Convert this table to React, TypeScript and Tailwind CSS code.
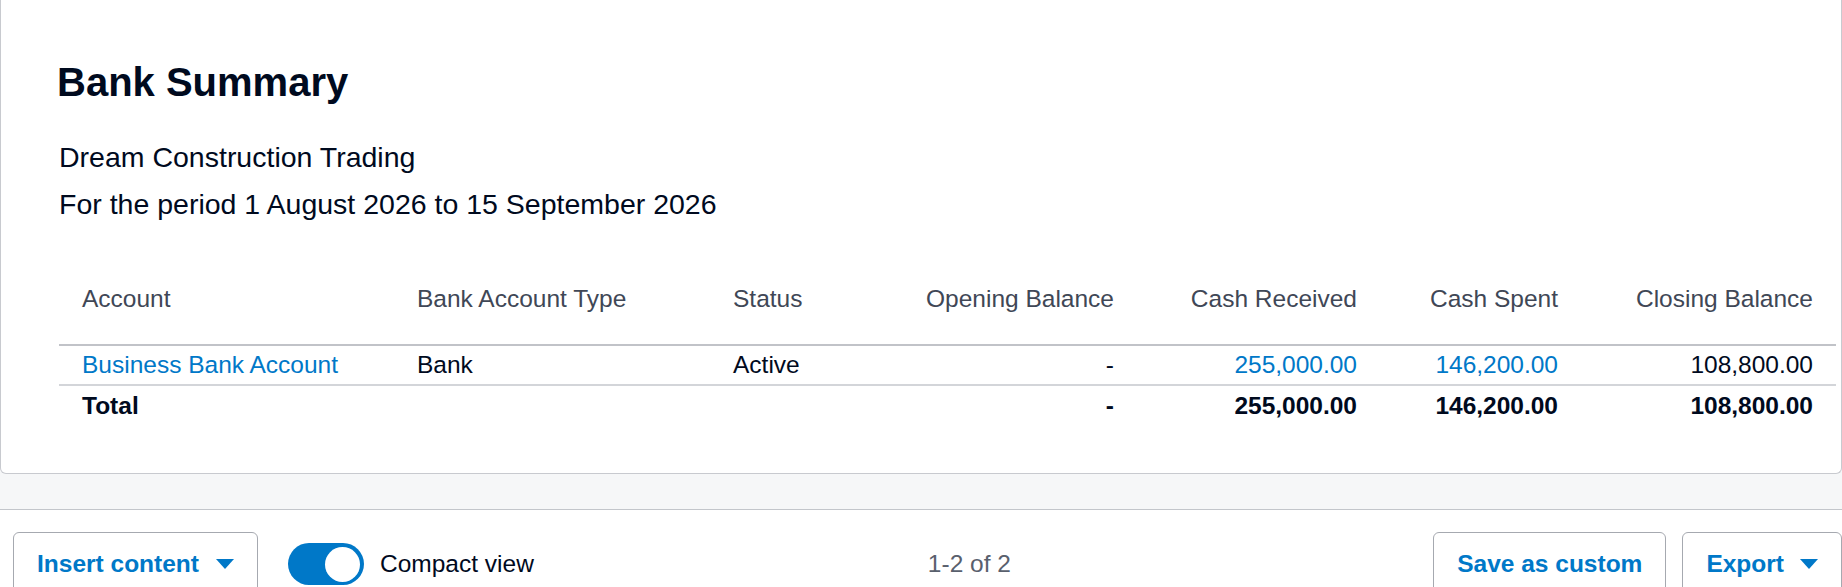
type Row = {
  account: string;
  type: string;
  status: string;
  opening: string;
  received: string;
  spent: string;
  closing: string;
};

const ROWS: Row[] = [
  {
    account: 'Business Bank Account',
    type: 'Bank',
    status: 'Active',
    opening: '-',
    received: '255,000.00',
    spent: '146,200.00',
    closing: '108,800.00',
  },
];

const COLS = [
  { label: 'Account', w: 'w-[335px]', align: 'text-left' },
  { label: 'Bank Account Type', w: 'w-[316px]', align: 'text-left' },
  { label: 'Status', w: 'w-[190px]', align: 'text-left' },
  { label: 'Opening Balance', w: 'w-[237px]', align: 'text-right' },
  { label: 'Cash Received', w: 'w-[243px]', align: 'text-right' },
  { label: 'Cash Spent', w: 'w-[201px]', align: 'text-right' },
  { label: 'Closing Balance', w: 'w-[255px]', align: 'text-right' },
];

function Caret() {
  return (
    <svg width="18" height="10" viewBox="0 0 18 10" className="shrink-0">
      <polygon points="0,0 18,0 9,10" fill="#0078c8" />
    </svg>
  );
}

export default function App() {
  return (
    <div className="h-[587px] w-[1842px] overflow-hidden bg-[#f6f7f8] font-['Liberation_Sans',Arial,sans-serif] text-[#000a1e]">
      {/* report card */}
      <div className="h-[474px] rounded-b-[6px] border-x border-b border-[#c8cacf] bg-white pl-[58px] pr-[5px]">
        <h1 className="-ml-[2px] pt-[58px] text-[40px] font-bold leading-[48px]">Bank Summary</h1>
        <div className="mt-[28px] text-[28.5px] leading-[47px]">
          <p>Dream Construction Trading</p>
          <p>For the period 1 August 2026 to 15 September 2026</p>
        </div>

        <table className="mt-[39px] w-[1777px] table-fixed border-collapse text-[24.5px] leading-[30px]">
          <colgroup>
            {COLS.map((c) => (
              <col key={c.label} className={c.w} />
            ))}
          </colgroup>
          <thead>
            <tr className="border-b-2 border-[#c1c3c8]">
              {COLS.map((c) => (
                <th
                  key={c.label}
                  className={`px-[23px] pt-[17px] pb-[30px] font-normal text-[#404756] ${c.align}`}
                >
                  {c.label}
                </th>
              ))}
            </tr>
          </thead>
          <tbody>
            {ROWS.map((r) => (
              <tr key={r.account} className="border-b-2 border-[#d3d5d9]">
                <td className="px-[23px] py-[4px] text-left text-[#0078c8]">{r.account}</td>
                <td className="px-[23px] py-[4px] text-left">{r.type}</td>
                <td className="px-[23px] py-[4px] text-left">{r.status}</td>
                <td className="px-[23px] py-[4px] text-right">{r.opening}</td>
                <td className="px-[23px] py-[4px] text-right text-[#0078c8]">{r.received}</td>
                <td className="px-[23px] py-[4px] text-right text-[#0078c8]">{r.spent}</td>
                <td className="px-[23px] py-[4px] text-right">{r.closing}</td>
              </tr>
            ))}
            <tr className="font-bold">
              <td className="px-[23px] pt-[5px] text-left">Total</td>
              <td className="px-[23px] pt-[5px]"></td>
              <td className="px-[23px] pt-[5px]"></td>
              <td className="px-[23px] pt-[5px] text-right">-</td>
              <td className="px-[23px] pt-[5px] text-right">255,000.00</td>
              <td className="px-[23px] pt-[5px] text-right">146,200.00</td>
              <td className="px-[23px] pt-[5px] text-right">108,800.00</td>
            </tr>
          </tbody>
        </table>
      </div>

      {/* gray band */}
      <div className="h-[36px] border-b border-[#c3c6cb]" />

      {/* toolbar */}
      <div className="flex h-[77px] items-start bg-white pl-[13px] pt-[22px]">
        <button className="flex h-[64px] items-center gap-[17px] rounded-[6px] border border-[#a6a9b0] bg-white px-[23px] text-[24.5px] font-bold text-[#0078c8]">
          Insert content
          <Caret />
        </button>

        <div className="ml-[30px] flex h-[64px] items-center gap-[16px]">
          <span className="flex h-[42px] w-[76px] items-center justify-end rounded-full bg-[#0078c8] px-[4px]">
            <span className="h-[35px] w-[35px] rounded-full bg-white" />
          </span>
          <span className="text-[24.5px]">Compact view</span>
        </div>

        <div className="ml-[394px] flex h-[64px] items-center text-[24.5px] text-[#59606d]">1-2 of 2</div>

        <div className="flex-1" />

        <div className="flex gap-[16px]">
          <button className="flex h-[64px] items-center rounded-[6px] border border-[#a6a9b0] bg-white px-[23px] text-[24.5px] font-bold text-[#0078c8]">
            Save as custom
          </button>
          <button className="flex h-[64px] items-center gap-[16px] rounded-[6px] border border-[#a6a9b0] bg-white px-[23px] text-[24.5px] font-bold text-[#0078c8]">
            Export
            <Caret />
          </button>
        </div>
      </div>
    </div>
  );
}
